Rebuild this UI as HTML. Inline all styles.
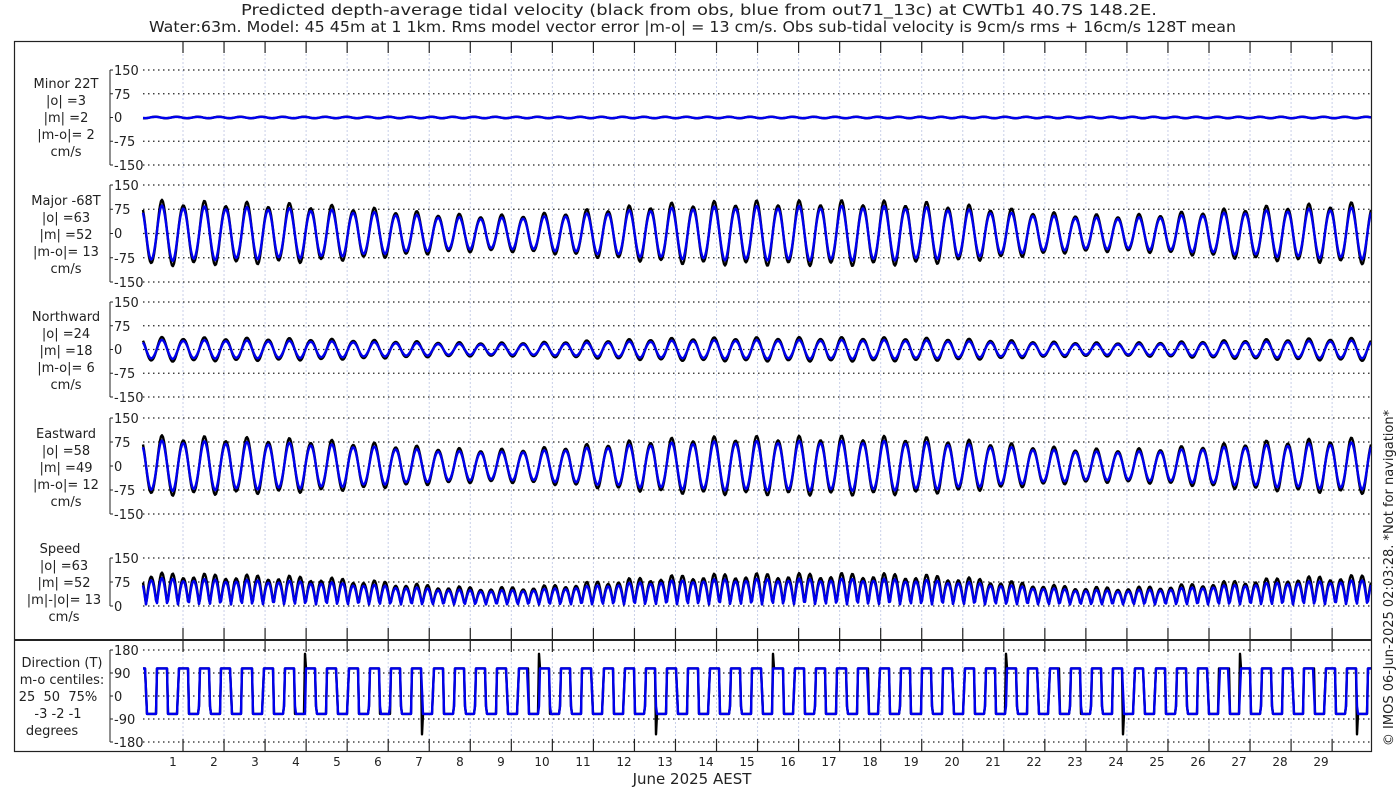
<!DOCTYPE html>
<html><head><meta charset="utf-8"><style>
html,body{margin:0;padding:0;background:#fff;}
svg{display:block;font-family:"DejaVu Sans","Liberation Sans",sans-serif;}
</style></head><body>
<svg id="s" width="1400" height="800" xmlns="http://www.w3.org/2000/svg">
<g font-size="15" fill="#222">
<text x="241" y="15" textLength="916" lengthAdjust="spacingAndGlyphs">Predicted depth-average tidal velocity (black from obs, blue from out71_13c) at CWTb1 40.7S 148.2E.</text>
<text x="149" y="32" textLength="1087" lengthAdjust="spacingAndGlyphs">Water:63m. Model: 45 45m at 1 1km. Rms model vector error |m-o| = 13 cm/s. Obs sub-tidal velocity is 9cm/s rms + 16cm/s 128T mean</text>
</g>
<g id="grid"></g>
<g id="data"></g>
<rect x="14.5" y="41.5" width="1357" height="710" fill="none" stroke="#222" stroke-width="1.2"/>
<line x1="14" y1="640" x2="1371" y2="640" stroke="#222" stroke-width="2"/>
<g font-size="13" text-anchor="middle" fill="#222">
<text x="66" y="88">Minor 22T</text><text x="66" y="105">|o| =3</text><text x="66" y="122">|m| =2</text><text x="66" y="139">|m-o|= 2</text><text x="66" y="156">cm/s</text>
<text x="66" y="205">Major -68T</text><text x="66" y="222">|o| =63</text><text x="66" y="239">|m| =52</text><text x="66" y="256">|m-o|= 13</text><text x="66" y="273">cm/s</text>
<text x="66" y="321">Northward</text><text x="66" y="338">|o| =24</text><text x="66" y="355">|m| =18</text><text x="66" y="372">|m-o|= 6</text><text x="66" y="389">cm/s</text>
<text x="66" y="438">Eastward</text><text x="66" y="455">|o| =58</text><text x="66" y="472">|m| =49</text><text x="66" y="489">|m-o|= 12</text><text x="66" y="506">cm/s</text>
<text x="60" y="553">Speed</text><text x="64" y="570">|o| =63</text><text x="64" y="587">|m| =52</text><text x="64" y="604">|m|-|o|= 13</text><text x="64" y="621">cm/s</text>
<text x="62" y="667">Direction (T)</text><text x="62" y="684">m-o centiles:</text><text x="58" y="701" xml:space="preserve">25  50  75%</text><text x="58" y="718">-3 -2 -1</text><text x="52" y="735">degrees</text>
</g>
<g font-size="13" fill="#222" id="ylab">
<text x="114" y="75">150</text><text x="114" y="99">75</text><text x="114" y="122">0</text><text x="114" y="146">-75</text><text x="114" y="170">-150</text>
<text x="114" y="190">150</text><text x="114" y="214">75</text><text x="114" y="238">0</text><text x="114" y="263">-75</text><text x="114" y="287">-150</text>
<text x="114" y="307">150</text><text x="114" y="331">75</text><text x="114" y="354">0</text><text x="114" y="378">-75</text><text x="114" y="402">-150</text>
<text x="114" y="423">150</text><text x="114" y="447">75</text><text x="114" y="471">0</text><text x="114" y="495">-75</text><text x="114" y="519">-150</text>
<text x="114" y="563">150</text><text x="114" y="587">75</text><text x="114" y="611">0</text>
<text x="114" y="655">180</text><text x="114" y="678">90</text><text x="114" y="701">0</text><text x="114" y="724">-90</text><text x="114" y="747">-180</text>
</g>
<g font-size="12" text-anchor="middle" fill="#222">
<text x="173" y="766">1</text><text x="214" y="766">2</text><text x="255" y="766">3</text><text x="296" y="766">4</text><text x="337" y="766">5</text><text x="378" y="766">6</text><text x="419" y="766">7</text><text x="460" y="766">8</text><text x="501" y="766">9</text><text x="542" y="766">10</text><text x="583" y="766">11</text><text x="624" y="766">12</text><text x="665" y="766">13</text><text x="706" y="766">14</text><text x="747" y="766">15</text><text x="788" y="766">16</text><text x="829" y="766">17</text><text x="870" y="766">18</text><text x="911" y="766">19</text><text x="952" y="766">20</text><text x="993" y="766">21</text><text x="1034" y="766">22</text><text x="1075" y="766">23</text><text x="1116" y="766">24</text><text x="1157" y="766">25</text><text x="1198" y="766">26</text><text x="1239" y="766">27</text><text x="1280" y="766">28</text><text x="1321" y="766">29</text>
</g>
<text x="692" y="784" font-size="15" text-anchor="middle" fill="#222">June 2025 AEST</text>
<text transform="translate(1393,578) rotate(-90)" font-size="13" text-anchor="middle" fill="#222">© IMOS 06-Jun-2025 02:03:28. *Not for navigation*</text>
</svg>
<script>
var NS="http://www.w3.org/2000/svg";
function el(p,t,a){var e=document.createElementNS(NS,t);for(var k in a)e.setAttribute(k,a[k]);p.appendChild(e);return e;}
var G=document.getElementById('grid'),D=document.getElementById('data');
var X0=143,X1=1371;
var P=[[70,165],[185,282],[302,397],[418,514]];
var lv=[];
P.forEach(function(p){var c=(p[0]+p[1])/2,h=(p[1]-p[0])/2;lv.push([p[0],p[0]+h/2,c,c+h/2,p[1]]);});
lv.push([558,582,606]);
lv.push([650,673,696,719,742]);
var tops=[70,185,302,418,558,650],bots=[165,282,397,514,606,742];
for(var k=0;k<29;k++){var x=183+41.04*k;
 el(G,'line',{x1:x,y1:42,x2:x,y2:751,stroke:'#c8cfe8','stroke-width':1,'stroke-dasharray':'2,2'});
 el(G,'line',{x1:x,y1:42,x2:x,y2:53,stroke:'#222','stroke-width':1.2});
 el(G,'line',{x1:x,y1:628,x2:x,y2:652,stroke:'#222','stroke-width':1.2});
 el(G,'line',{x1:x,y1:739,x2:x,y2:751,stroke:'#222','stroke-width':1.2});
}
lv.forEach(function(L,i){
 L.forEach(function(y){
  el(G,'line',{x1:X0,y1:y,x2:X1,y2:y,stroke:'#222','stroke-width':1.2,'stroke-dasharray':'1.5,3.5'});
  el(G,'line',{x1:110,y1:y,x2:113,y2:y,stroke:'#222','stroke-width':1});
 });
 el(G,'line',{x1:110,y1:tops[i],x2:110,y2:bots[i],stroke:'#222','stroke-width':1});
});
var Pp=21.24;
function amp(x){return 70+18*Math.cos(2*Math.PI*(x-165)/640)+4*Math.cos(2*Math.PI*(x-1250)/300);}
function maj(x,o){var ph=2*Math.PI*(x-162)/Pp;var a=amp(x)*(o?1.13:0.97);
 var di=(o?0.10:0.06)*Math.cos(2*Math.PI*(x-162)/(Pp*2)+0.6);
 return a*(Math.cos(ph)+di*Math.cos(ph)*Math.cos(ph));}
function path(f,y0,sc,col,w){var d='';for(var x=X0;x<=X1;x+=1){var v=f(x);d+=(x==X0?'M':'L')+x+','+(y0-v*sc).toFixed(1);}
 el(D,'path',{d:d,fill:'none',stroke:col,'stroke-width':w,'stroke-linejoin':'round'});}
var cols=[['#000',false],['#0000ee',true]];
var sc1=47.5/150;
cols.forEach(function(c){var o=!c[1];
 path(function(x){return (o?2.5:2)*Math.sin(2*Math.PI*(x-150)/Pp);},117.5,sc1,c[0],2.4);
 path(function(x){return maj(x,o);},233.5,48.5/150,c[0],2.4);
 path(function(x){return 0.38*maj(x,o)*(o?1:0.92);},349.5,47.5/150,c[0],2.4);
 path(function(x){return 0.92*maj(x,o);},466,48/150,c[0],2.4);
 path(function(x){var m=maj(x,o);return Math.sqrt(m*m+25);},606,48/150,c[0],2.4);
 path(function(x){var m=maj(x,o);var v=m>6?108:(m<-6?-70:(m>0?20:-40));
   if(o){var n=Math.floor((x-162)/(Pp/2));if(((n*7)%11)==3&&Math.abs(m)<10)v=(n%2?165:-150);}
   return v;},696,46/180,c[0],2.4);
});
</script>
</body></html>
